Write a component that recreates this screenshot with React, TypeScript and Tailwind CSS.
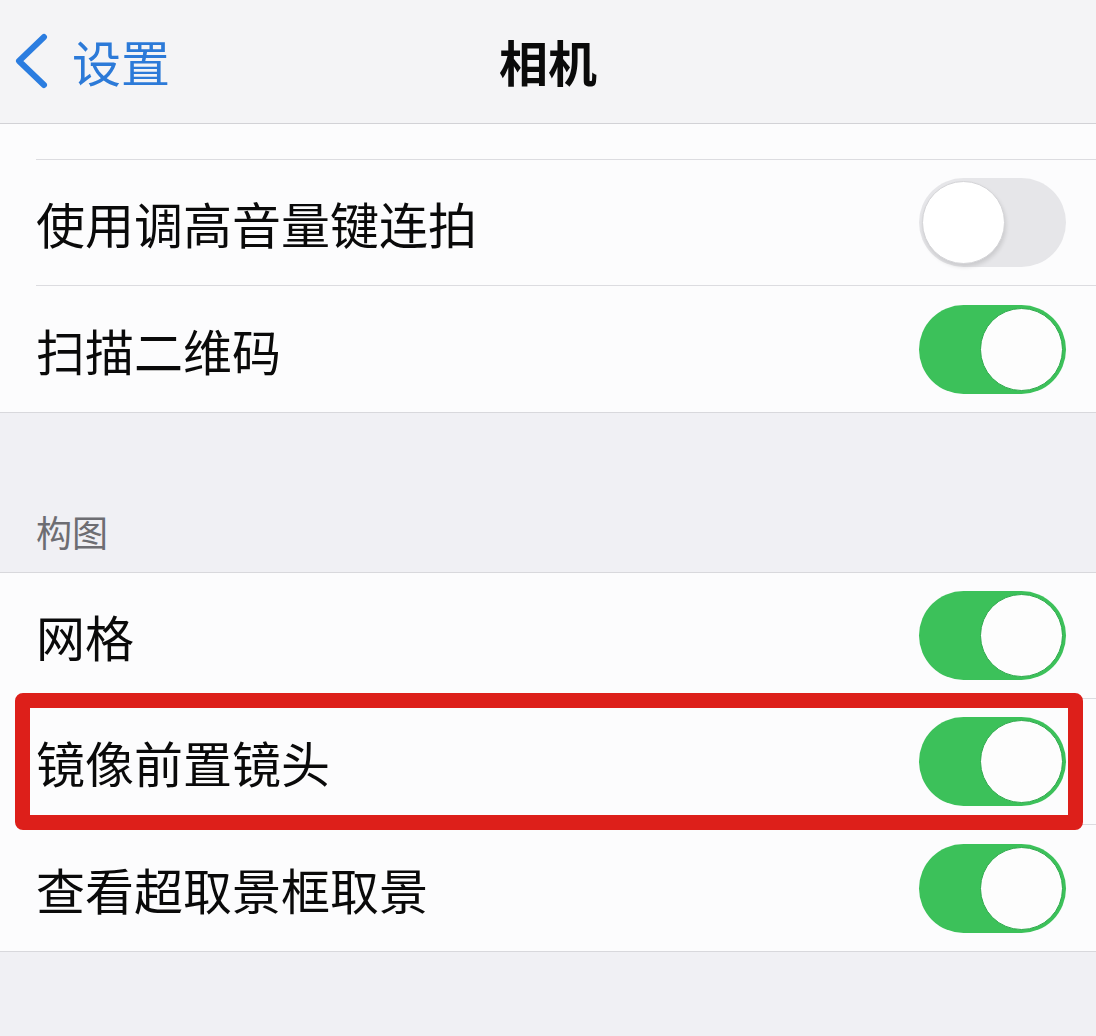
import React from "react";

const font = { fontFamily: '"Noto Sans CJK SC", "Noto Sans", sans-serif' };

function Toggle({ on }: { on: boolean }) {
  if (on) {
    return (
      <div className="relative w-[147px] h-[89px] rounded-full bg-[#3cc15a] shrink-0">
        <div className="absolute right-[3px] top-[3px] w-[83px] h-[83px] rounded-full bg-[#fdfdfd] border border-[#2fa94c]" />
      </div>
    );
  }
  return (
    <div className="relative w-[147px] h-[89px] rounded-full bg-[#e6e6e9] shrink-0">
      <div className="absolute left-[3px] top-[3px] w-[83px] h-[83px] rounded-full bg-white border border-[#d4d4d7] shadow-[1px_3px_4px_rgba(0,0,0,0.12)]" />
    </div>
  );
}

function Row({ label, on, sep = true }: { label: string; on: boolean; sep?: boolean }) {
  return (
    <div className="pl-[36px]">
      <div className={`h-[126px] flex items-center justify-between pr-[30px] ${sep ? "border-b border-[#dcdce0]" : ""}`}>
        <span className="text-[49px] leading-none text-[#0a0a0a] tracking-[0px]" style={font}>
          {label}
        </span>
        <Toggle on={on} />
      </div>
    </div>
  );
}

export default function App() {
  return (
    <div className="w-[1096px] h-[1036px] bg-[#f0f0f4] overflow-hidden relative" style={font}>
      {/* Nav bar */}
      <div className="h-[124px] bg-[#f4f4f6] border-b border-[#d2d2d6] flex items-center relative">
        <div className="flex items-center pl-[14px] gap-[24px] pb-[2px]">
          <svg width="34" height="56" viewBox="0 0 34 56">
            <path d="M30 4 L5 28 L30 52" fill="none" stroke="#2b7de0" strokeWidth="6" strokeLinecap="round" strokeLinejoin="round" />
          </svg>
          <span className="text-[49px] leading-none text-[#2c7ad8]">设置</span>
        </div>
        <div className="absolute inset-0 flex items-center justify-center pb-[2px]">
          <span className="text-[49px] leading-none font-bold text-[#0a0a0a]">相机</span>
        </div>
      </div>

      {/* Group 1 */}
      <div className="bg-[#fcfcfd] border-b border-[#d8d8dc]">
        <div className="pl-[36px]">
          <div className="h-[36px] border-b border-[#dcdce0]" />
        </div>
        <Row label="使用调高音量键连拍" on={false} />
        <Row label="扫描二维码" on={true} sep={false} />
      </div>

      {/* Section header */}
      <div className="h-[159px] flex items-end pl-[36px] pb-[23px]">
        <span className="text-[36px] leading-none text-[#6d6d72]">构图</span>
      </div>

      {/* Group 2 */}
      <div className="bg-[#fcfcfd] border-t border-b border-[#d8d8dc]">
        <Row label="网格" on={true} />
        <Row label="镜像前置镜头" on={true} />
        <Row label="查看超取景框取景" on={true} sep={false} />
      </div>

      {/* Red highlight box */}
      <div className="absolute left-[15px] top-[693px] w-[1068px] h-[137px] border-[15px] border-[#dd1f1a] rounded-[8px] pointer-events-none" />
    </div>
  );
}
